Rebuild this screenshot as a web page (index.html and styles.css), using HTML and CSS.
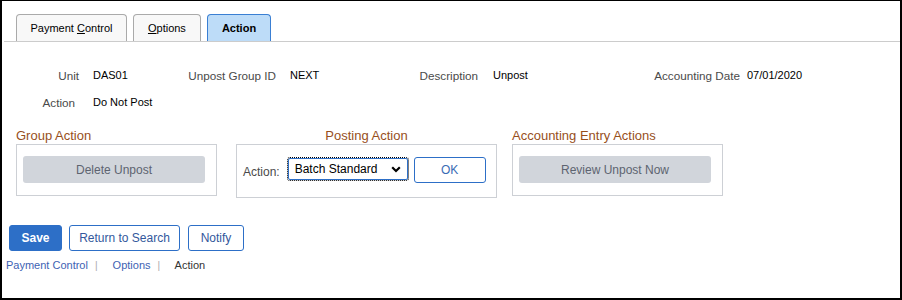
FILE: index.html
```html
<!DOCTYPE html>
<html lang="en">
<head>
  <meta charset="UTF-8" />
  <title>Unpost - Action</title>
  <meta name="viewport" content="width=device-width, initial-scale=1.0" />
  <link rel="stylesheet" href="styles.css">
</head>
<body>
  <div class="frame">

    <!-- Page tabs -->
    <div class="tabs">
      <span class="tab tab-first">Payment <u>C</u>ontrol</span>
      <span class="tab"><u>O</u>ptions</span>
      <span class="tab tab-active">Action</span>
    </div>

    <!-- Header fields -->
    <div class="fields">
      <span class="label">Unit</span>
      <span class="value">DAS01</span>
      <span class="label">Unpost Group ID</span>
      <span class="value">NEXT</span>
      <span class="label">Description</span>
      <span class="value value-desc">Unpost</span>
      <span class="label">Accounting Date</span>
      <span class="value value-date">07/01/2020</span>

      <span class="label label-action">Action</span>
      <span class="value value-wide">Do Not Post</span>
    </div>

    <!-- Group boxes -->
    <div class="groups">
      <div class="group group-first">
        <div class="group-title">Group Action</div>
        <div class="group-box">
          <button class="disabled-button delete-button" disabled>Delete Unpost</button>
        </div>
      </div>

      <div class="group group-posting">
        <div class="group-title group-title-center">Posting Action</div>
        <div class="group-box posting-box">
          <span class="posting-label">Action:</span>
          <div class="select-box">
            <span>Batch Standard</span>
            <svg width="10" height="7" viewBox="0 0 10 7">
              <polyline points="1.2,1.3 5,5 8.8,1.3" fill="none" stroke="#000" stroke-width="2.2" />
            </svg>
          </div>
          <button class="ok-button">OK</button>
        </div>
      </div>

      <div class="group group-entry">
        <div class="group-title">Accounting Entry Actions</div>
        <div class="group-box">
          <button class="disabled-button review-button" disabled>Review Unpost Now</button>
        </div>
      </div>
    </div>

    <!-- Toolbar -->
    <div class="actions">
      <button class="save-button">Save</button>
      <button class="plain-button return-button">Return to Search</button>
      <button class="plain-button notify-button">Notify</button>
    </div>

    <!-- Page links -->
    <div class="crumbs">
      <a href="#">Payment Control</a><span class="sep">|</span>
      <a href="#">Options</a><span class="sep">|</span>
      <span class="current">Action</span>
    </div>

  </div>
</body>
</html>
```

FILE: styles.css
```css
:root {
  --blue: #2d6fc7;
  --brown: #974f1c;
  --label: #4a4a4a;
  --box-line: #cdd0d5;
  --disabled-bg: #d1d5db;
}

body {
  margin: 0;
  font-family: "Liberation Sans", Arial, sans-serif;
  color: #000;
  background-color: white;
}

.frame {
  width: 902px;
  height: 300px;
  box-sizing: border-box;
  border: 2px solid #000;
  border-top-width: 1px;
}

/* tabs */
.tabs {
  display: flex;
  gap: 6px;
  margin-left: 2px;
  padding: 13px 0 0 12px;
  border-bottom: 1px solid #ccc;
}

.tab {
  height: 26px;
  line-height: 26px;
  padding: 0 14px;
  font-size: 11px;
  background-color: #f8f8f8;
  border: 1px solid #aaa;
  border-bottom: none;
  border-radius: 4px 4px 0 0;
}

.tab-first {
  padding: 0 13.5px;
}

.tab-active {
  background-color: #bddcf8;
  border-color: #3a7fd3;
  font-weight: bold;
}

/* header fields */
.fields {
  display: grid;
  grid-template-columns: 77px 71px 126px 74px 128px 122px 140px auto;
  grid-auto-rows: 20px;
  row-gap: 7px;
  margin-top: 23px;
  align-items: center;
}

.label {
  font-size: 11.7px;
  color: var(--label);
  text-align: right;
}

.label-action {
  padding-right: 4px;
}

.value {
  font-size: 11px;
  padding-left: 14px;
}

.value-desc {
  padding-left: 15px;
}

.value-date {
  padding-left: 7px;
}

.value-wide {
  grid-column: span 3;
}

/* group boxes */
.groups {
  display: flex;
  margin-top: 16px;
  padding-left: 14px;
}

.group-first {
  width: 201px;
}

.group-posting {
  width: 261px;
  margin-left: 19px;
}

.group-entry {
  width: 211px;
  margin-left: 15px;
}

.group-title {
  font-size: 13px;
  line-height: 16px;
  color: var(--brown);
}

.group-title-center {
  text-align: center;
}

.group-box {
  border: 1px solid var(--box-line);
  padding: 11px 6px 12px 6px;
  display: flex;
}

.disabled-button {
  height: 27px;
  border: none;
  border-radius: 3px;
  background-color: var(--disabled-bg);
  color: #5d6470;
  font-family: inherit;
  font-size: 12px;
}

.delete-button {
  width: 182px;
}

.review-button {
  width: 192px;
}

.posting-box {
  padding: 12px 10px 12px 6px;
  align-items: flex-start;
}

.posting-label {
  font-size: 12px;
  line-height: 26px;
  padding-top: 2px;
  color: var(--label);
}

.select-box {
  width: 120px;
  height: 22px;
  box-sizing: border-box;
  margin: 1px 0 0 8px;
  padding: 0 6px 0 6px;
  border: 1px solid var(--blue);
  border-radius: 2px;
  outline: 1px dotted #000;
  display: flex;
  align-items: center;
  justify-content: space-between;
  font-size: 12px;
}

.ok-button {
  width: 72px;
  height: 26px;
  margin-left: 6px;
  background-color: white;
  border: 1px solid var(--blue);
  border-radius: 3px;
  color: #3a6cb5;
  font-family: inherit;
  font-size: 12px;
}

/* toolbar */
.actions {
  display: flex;
  margin-top: 27px;
  padding-left: 7px;
}

.actions button {
  height: 26px;
  border-radius: 3px;
  font-family: inherit;
  font-size: 12px;
  padding: 0;
}

.save-button {
  width: 53px;
  background-color: var(--blue);
  border: 1px solid var(--blue);
  color: white;
  font-weight: bold;
}

.plain-button {
  background-color: white;
  border: 1px solid var(--blue);
  color: #33589c;
}

.return-button {
  width: 111px;
  margin-left: 7px;
}

.notify-button {
  width: 56px;
  margin-left: 8px;
}

/* page links */
.crumbs {
  margin-top: 7px;
  padding-left: 4px;
  font-size: 11px;
  line-height: 14px;
}

.crumbs a {
  color: #3d62b3;
  text-decoration: none;
}

.sep {
  color: #aaa;
  font-size: 10px;
  margin: 0 12px 0 7px;
}

.current {
  color: #333;
}
```
